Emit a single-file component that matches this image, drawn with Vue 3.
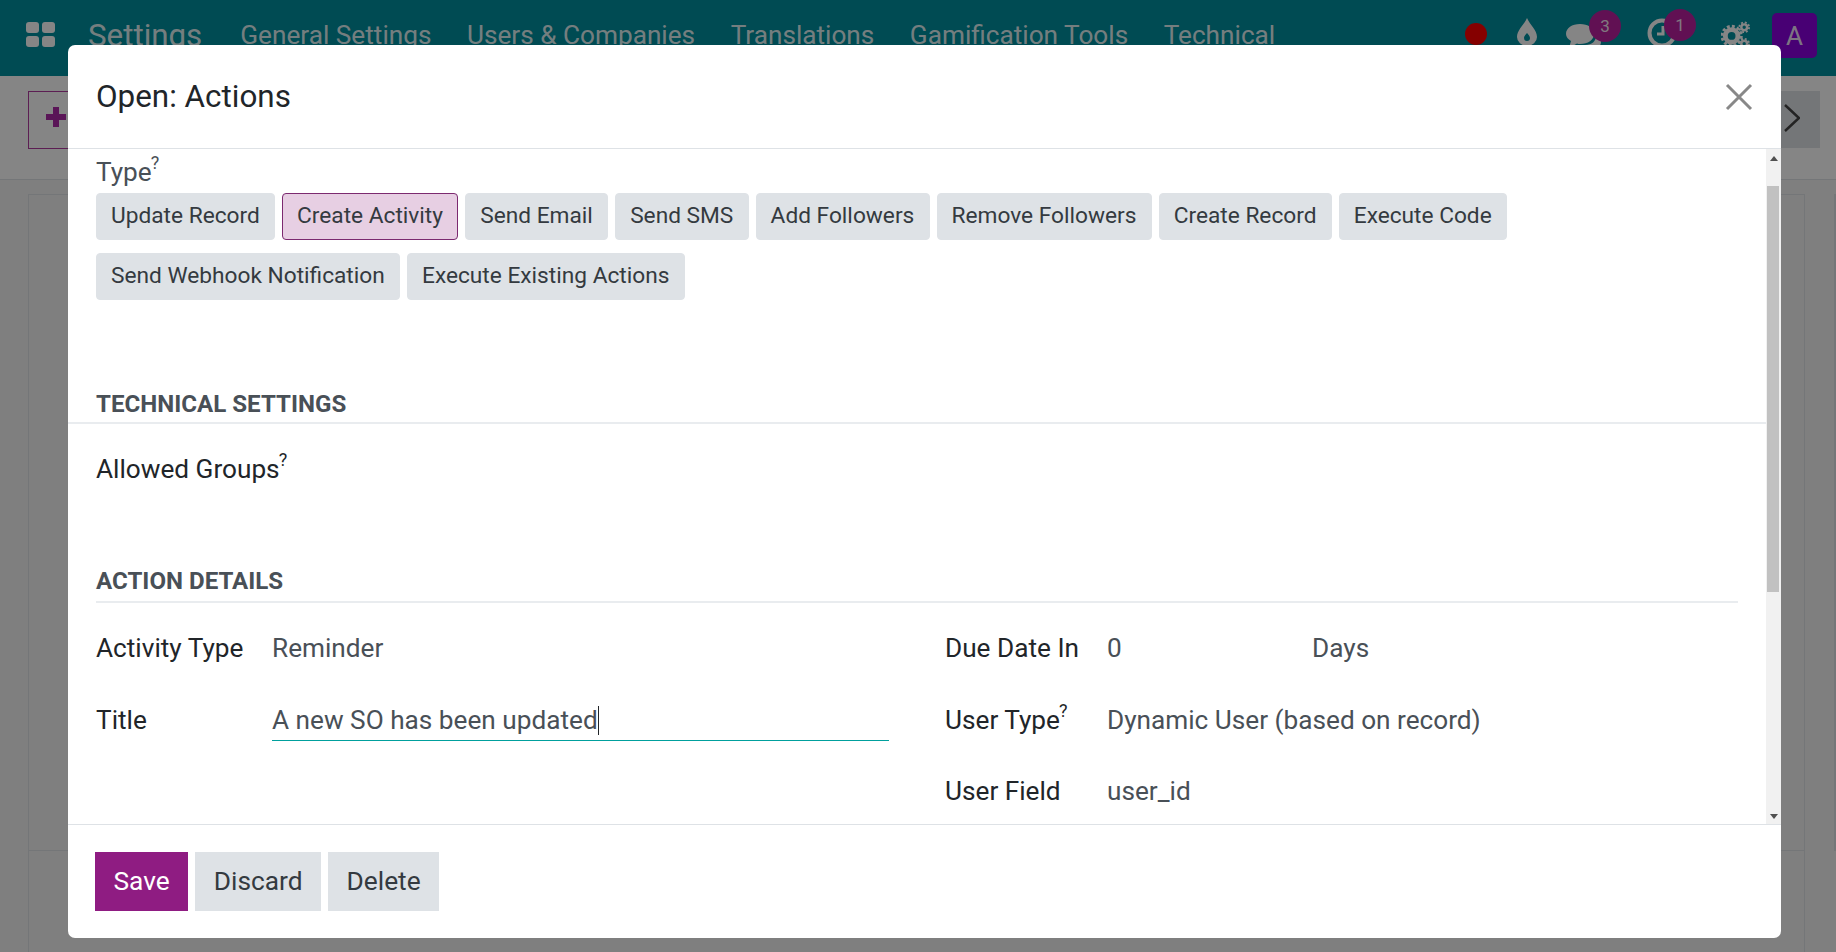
<template>
  <div class="page">
    <header class="navbar">
      <svg class="apps" viewBox="0 0 29 25" width="29" height="25">
        <rect x="0" y="0" width="13" height="11" rx="3" />
        <rect x="16" y="0" width="13" height="11" rx="3" />
        <rect x="0" y="14" width="13" height="11" rx="3" />
        <rect x="16" y="14" width="13" height="11" rx="3" />
      </svg>
      <span class="brand">Settings</span>
      <nav class="menu">
        <a v-for="item in menu" :key="item">{{ item }}</a>
      </nav>
      <div class="systray">
        <span class="dot"></span>
        <svg class="drop" viewBox="0 0 20 28" width="20" height="28">
          <path d="M10 0C13 7 20 12 20 19a10 9 0 0 1-20 0C0 12 7 7 10 0z" fill="#fff" />
          <path d="M10 15c1.500 2 3 3 3 5a3 3 0 0 1-6 0c0-2 1.500-3 3-5z" fill="#0090a0" />
        </svg>
        <span class="tray-item chat">
          <svg viewBox="0 0 36 28" width="36" height="28">
            <path d="M14 2c8 0 14 4 14 10s-6 10-14 10c-1 0-2 0-3-.500L3 26l2-7C2 17 0 15 0 12 0 6 6 2 14 2z" fill="#fff" />
            <path d="M30 14c3 2 5 4 5 6 0 2-1 4-3 5l1 3-6-2c-3 0-6-1-8-3 7 0 11-4 11-9z" fill="#fff" />
          </svg>
          <b class="badge chat-badge">3</b>
        </span>
        <span class="tray-item clock">
          <svg viewBox="0 0 30 30" width="30" height="30">
            <circle cx="15" cy="15" r="12.500" fill="none" stroke="#fff" stroke-width="4" />
            <path d="M16 8v8h-6" fill="none" stroke="#fff" stroke-width="3" />
          </svg>
          <b class="badge clock-badge">1</b>
        </span>
        <svg class="gears" viewBox="0 0 30 28" width="29" height="28" fill="none" stroke="#fff">
          <circle cx="11" cy="15" r="6.500" stroke-width="5" />
          <circle cx="11" cy="15" r="10" stroke-width="3" stroke-dasharray="3 2.230" />
          <circle cx="24" cy="6" r="3" stroke-width="2.500" />
          <circle cx="24" cy="6" r="5" stroke-width="2" stroke-dasharray="2 1.930" />
          <circle cx="24" cy="23" r="3" stroke-width="2.500" />
          <circle cx="24" cy="23" r="5" stroke-width="2" stroke-dasharray="2 1.930" />
        </svg>
        <span class="avatar">A</span>
      </div>
    </header>

    <section class="control-panel">
      <button class="new-btn">
        <svg viewBox="0 0 20 20" width="20" height="20"><path d="M10 0v20M0 10h20" stroke="#ac2aa8" stroke-width="6" fill="none" /></svg>
      </button>
      <button class="pager-btn">
        <svg viewBox="0 0 16 28" width="16" height="28"><path d="M1 1l14 13L1 27" fill="none" stroke="#444" stroke-width="2.500" /></svg>
      </button>
    </section>
    <section class="sheet-bg">
      <div class="sheet"><div class="sheet-inner"></div></div>
      <div class="strip"></div>
    </section>

    <div class="backdrop"></div>

    <div class="modal">
      <div class="modal-head">
        <h4>Open: Actions</h4>
        <svg class="close" viewBox="0 0 28 28" width="28" height="28">
          <path d="M2 2l24 24M26 2L2 26" stroke="#888" stroke-width="3" fill="none" />
        </svg>
      </div>

      <div class="modal-body">
        <div class="scroll-area">
          <div class="type-label">Type<sup>?</sup></div>
          <div class="pills">
            <span v-for="t in types" :key="t" class="pill" :class="{ active: t === 'Create Activity' }">{{ t }}</span>
          </div>

          <div class="group-title wide">TECHNICAL SETTINGS</div>
          <div class="groups-row">Allowed Groups<sup>?</sup></div>

          <div class="group-title">ACTION DETAILS</div>
          <div class="details">
            <div class="col">
              <div class="row">
                <label class="left-label">Activity Type</label>
                <span class="val">Reminder</span>
              </div>
              <div class="row">
                <label class="left-label">Title</label>
                <span class="val input">A new SO has been updated<i class="caret"></i></span>
              </div>
            </div>
            <div class="col">
              <div class="row">
                <label class="right-label">Due Date In</label>
                <span class="val due">0</span>
                <span class="val">Days</span>
              </div>
              <div class="row">
                <label class="right-label">User Type<sup>?</sup></label>
                <span class="val">Dynamic User (based on record)</span>
              </div>
              <div class="row">
                <label class="right-label">User Field</label>
                <span class="val">user_id</span>
              </div>
            </div>
          </div>
        </div>
        <div class="scrollbar">
          <span class="arrow up"></span>
          <div class="track"><div class="thumb"></div></div>
          <span class="arrow down"></span>
        </div>
      </div>

      <div class="modal-foot">
        <button class="btn primary">Save</button>
        <button class="btn">Discard</button>
        <button class="btn">Delete</button>
      </div>
    </div>
  </div>
</template>

<script setup>
const menu = ["General Settings", "Users & Companies", "Translations", "Gamification Tools", "Technical"];
const types = [
  "Update Record",
  "Create Activity",
  "Send Email",
  "Send SMS",
  "Add Followers",
  "Remove Followers",
  "Create Record",
  "Execute Code",
  "Send Webhook Notification",
  "Execute Existing Actions",
];
</script>

<style>
html,
body {
  margin: 0;
  height: 100%;
  overflow: hidden;
}
</style>

<style scoped>
.page {
  position: relative;
  width: 1836px;
  height: 952px;
  overflow: hidden;
  background: #fff;
  font-family: Roboto, "Liberation Sans", sans-serif;
  font-size: 26.200px;
  color: #212529;
}
.navbar {
  height: 76px;
  background: #0090a0;
  display: flex;
  align-items: center;
  color: rgba(255, 255, 255, 0.9);
  padding-left: 26px;
  box-sizing: border-box;
}
.apps {
  fill: #fff;
  flex: none;
  margin-bottom: 8px;
}
.brand {
  margin-left: 33px;
  font-size: 31.300px;
  margin-bottom: 5px;
}
.menu {
  display: flex;
  gap: 35.500px;
  margin-left: 38px;
  margin-bottom: 6px;
  font-size: 26.200px;
}
.systray {
  margin-left: auto;
  margin-right: 19px;
  display: flex;
  align-items: center;
  margin-bottom: 5px;
}
.dot {
  width: 22px;
  height: 22px;
  border-radius: 50%;
  background: #ff0000;
  margin-bottom: 3px;
}
.drop {
  margin-left: 30px;
  margin-bottom: 7px;
}
.tray-item {
  position: relative;
  display: flex;
}
.chat {
  margin-left: 29px;
}
.clock {
  margin-left: 45px;
  margin-bottom: 5px;
}
.badge {
  position: absolute;
  width: 32px;
  height: 32px;
  border-radius: 50%;
  background: #ba20a0;
  font-size: 17px;
  font-weight: 400;
  display: flex;
  align-items: center;
  justify-content: center;
}
.chat-badge {
  top: -12px;
  left: 23px;
}
.clock-badge {
  top: -9px;
  left: 17px;
}
.gears {
  margin-left: 44px;
  margin-right: 1px;
  margin-bottom: 1px;
}
.avatar {
  width: 45px;
  height: 45px;
  border-radius: 5px;
  background: #8a00de;
  display: flex;
  align-items: center;
  justify-content: center;
  font-size: 26px;
  margin-left: 21px;
}
.control-panel {
  height: 104px;
  border-bottom: 1px solid #dee2e6;
  display: flex;
  justify-content: space-between;
  padding: 15px 16px 0 28px;
  box-sizing: border-box;
}
.new-btn {
  width: 120px;
  height: 58px;
  border: 1px solid #b03a9f;
  background: transparent;
  padding: 0 0 4px 17px;
  text-align: left;
}
.pager-btn {
  width: 60px;
  height: 57px;
  border: none;
  background: #dee2e6;
  padding: 0 0 0 24px;
  text-align: left;
}
.sheet-bg {
  height: 772px;
  background: #f4f4f4;
  padding: 14px 0 0 28px;
  box-sizing: border-box;
  display: flex;
  justify-content: space-between;
  align-items: flex-start;
}
.sheet {
  width: 1777px;
  height: 758px;
  border: 1px solid #dee2e6;
  border-bottom: none;
  box-sizing: border-box;
}
.sheet-inner {
  height: 655px;
  border-bottom: 1px solid #dee2e6;
}
.strip {
  width: 2px;
  height: 657px;
  background: #dee2e6;
}
.backdrop {
  position: absolute;
  inset: 0;
  background: rgba(0, 0, 0, 0.48);
}
.modal {
  position: absolute;
  left: 68px;
  top: 45px;
  width: 1713px;
  height: 893px;
  background: #fff;
  border-radius: 7px;
  display: flex;
  flex-direction: column;
  overflow: hidden;
}
.modal-head {
  height: 104px;
  flex: none;
  border-bottom: 1px solid #dee2e6;
  box-sizing: border-box;
  display: flex;
  align-items: center;
  justify-content: space-between;
  padding: 0 28px;
}
.modal-head h4 {
  margin: 0;
  font-size: 31.400px;
  font-weight: 400;
}
.modal-body {
  flex: 1;
  min-height: 0;
  display: flex;
}
.scroll-area {
  flex: 1;
  min-width: 0;
  overflow: hidden;
  padding-top: 6px;
}
sup {
  font-size: 18px;
  line-height: 0;
  vertical-align: 12px;
  margin-left: -1px;
}
.type-label {
  padding-left: 28px;
  color: #495057;
  line-height: 34px;
}
.pills {
  display: flex;
  flex-wrap: wrap;
  gap: 13px 7px;
  margin: 4px 28px 0;
  width: 1500px;
}
.pill {
  height: 47px;
  line-height: 44px;
  box-sizing: border-box;
  border: 1px solid #dee2e6;
  border-radius: 4px;
  background: #dee2e6;
  padding: 0 14.250px 0 14px;
  font-size: 22.700px;
  color: #343a40;
}
.pill.active {
  background: #e7cfe3;
  border-color: #7c2a70;
}
.group-title {
  margin: 0 28px;
  border-bottom: 2px solid #e9ecef;
  font-weight: 700;
  font-size: 24.100px;
  line-height: 34px;
  padding-bottom: 3px;
  color: #495057;
}
.group-title.wide {
  margin: 87px 0 0;
  padding-left: 28px;
  padding-bottom: 1px;
}
.groups-row {
  padding-left: 28px;
  margin-top: 28px;
  line-height: 34px;
  height: 112px;
}
.details {
  display: flex;
  padding: 0 28px;
  margin-top: 9px;
}
.col {
  width: 849px;
  flex: none;
}
.col + .col {
  flex: 1;
}
.row {
  display: flex;
  align-items: center;
  height: 71.500px;
  box-sizing: border-box;
}
.row:nth-child(2) {
  padding-top: 2px;
}
.left-label {
  width: 176px;
  flex: none;
}
.right-label {
  width: 162px;
  flex: none;
}
.val {
  color: #495057;
}
.val.due {
  width: 205px;
}
.input {
  width: 617px;
  height: 41px;
  line-height: 40px;
  margin-top: 1px;
  box-sizing: border-box;
  border-bottom: 1px solid #00a09d;
}
.caret {
  display: inline-block;
  width: 1px;
  height: 29px;
  background: #212529;
  vertical-align: -6px;
}
.scrollbar {
  width: 15px;
  flex: none;
  background: #f1f1f1;
  display: flex;
  flex-direction: column;
  align-items: center;
}
.track {
  flex: 1;
  width: 100%;
  padding: 0 2px 0 1px;
  box-sizing: border-box;
}
.thumb {
  height: 406px;
  margin-top: 25px;
  background: #c1c1c1;
}
.arrow {
  width: 0;
  height: 0;
  border-left: 4px solid transparent;
  border-right: 4px solid transparent;
  flex: none;
}
.arrow.up {
  border-bottom: 5px solid #505050;
  margin-top: 7px;
}
.arrow.down {
  border-top: 5px solid #505050;
  margin-bottom: 5px;
}
.modal-foot {
  height: 114px;
  flex: none;
  border-top: 1px solid #dee2e6;
  box-sizing: border-box;
  display: flex;
  gap: 7px;
  padding: 27px 27px 0;
}
.btn {
  height: 59px;
  border: none;
  background: #dee2e6;
  padding: 0 18.500px 2px;
  font-family: inherit;
  font-size: 26.300px;
  color: #343a40;
}
.btn.primary {
  background: #8f1c82;
  color: #fff;
}
</style>
